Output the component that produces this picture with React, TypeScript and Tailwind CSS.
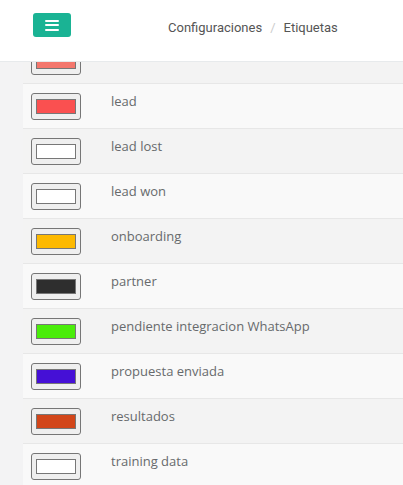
const labels = [
  { name: "", color: "#f4776d" },
  { name: "lead", color: "#fa5050" },
  { name: "lead lost", color: "#ffffff" },
  { name: "lead won", color: "#ffffff" },
  { name: "onboarding", color: "#fdb900" },
  { name: "partner", color: "#2e2e2e" },
  { name: "pendiente integracion WhatsApp", color: "#4aed0a" },
  { name: "propuesta enviada", color: "#4510d6" },
  { name: "resultados", color: "#d2461a" },
  { name: "training data", color: "#ffffff" },
];

function Swatch({ color }: { color: string }) {
  return (
    <div className="w-[50px] h-[27px] rounded-[3px] border border-[#767676] bg-[#efefef] px-1 py-[5px]">
      <div className="w-full h-full border border-[#777777]" style={{ backgroundColor: color }} />
    </div>
  );
}

export default function App() {
  return (
    <div className="w-[403px] h-[485px] flex flex-col bg-[#f3f3f4] font-['Open_Sans',sans-serif] text-[13px] text-[#676a6c] overflow-hidden">
      {/* header */}
      <div className="relative z-10 h-[62px] shrink-0 bg-white border-b border-[#e7eaec] flex items-start">
        <button className="mt-[13px] ml-[33px] w-[38px] h-[24px] rounded-[3px] bg-[#1ab394] flex flex-col items-center justify-center gap-[2.5px]">
          <span className="block w-[14px] h-[2px] bg-white rounded-[1px]" />
          <span className="block w-[14px] h-[2px] bg-white rounded-[1px]" />
          <span className="block w-[14px] h-[2px] bg-white rounded-[1px]" />
        </button>
        <div className="ml-[97px] mt-[18px] flex items-center font-['Roboto',sans-serif] text-[13px] text-[#555555]">
          <span>Configuraciones</span>
          <span className="px-[8px] text-[#cccccc]">/</span>
          <span>Etiquetas</span>
        </div>
      </div>

      {/* table */}
      <div className="flex-1 overflow-hidden pl-[23px]">
        <div className="-mt-[24px]">
          {labels.map((l, i) => (
            <div
              key={i}
              className={`flex h-[45px] border-t border-[#e7e7e7] ${i % 2 === 0 ? "bg-[#f3f3f3]" : "bg-[#f9f9f9]"}`}
            >
              <div className="w-[80px] shrink-0 pl-2 pt-[9px]">
                <Swatch color={l.color} />
              </div>
              <div className="pl-2 pt-2 leading-[1.42857]">{l.name}</div>
            </div>
          ))}
        </div>
      </div>
    </div>
  );
}
